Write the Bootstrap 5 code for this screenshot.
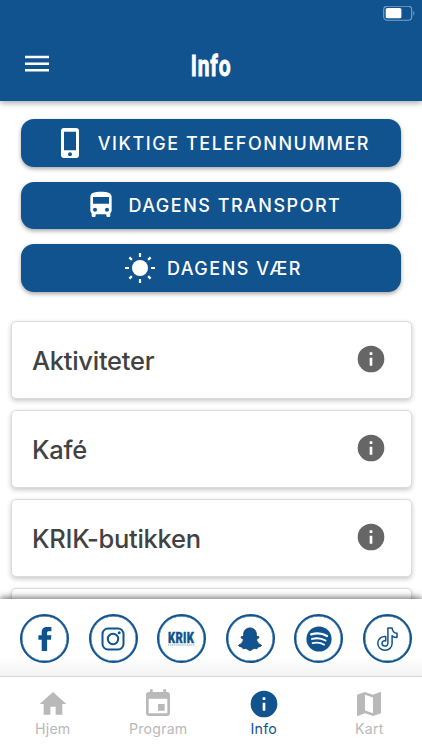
<!DOCTYPE html>
<html lang="no">
<head>
<meta charset="utf-8">
<meta name="viewport" content="width=device-width, initial-scale=1">
<title>Info</title>
<link href="https://cdn.jsdelivr.net/npm/bootstrap@5.3.0/dist/css/bootstrap.min.css" rel="stylesheet">
<style>
:root{--brand:#10538f}
body{font-family:Inter,Roboto,"Liberation Sans",sans-serif;height:750px;background:#fff}
svg{display:block;flex:none}
.app-head{height:100.5px;background:var(--brand);box-shadow:0 2px 6px rgba(0,0,0,.35);z-index:2}
.status-row{height:27px;padding:6px 7px 0 0}
.title-row{height:73px;padding:0 25px}
.page-title{font:700 30px/36px Roboto,sans-serif;letter-spacing:1.2px;transform:scaleX(.7);margin-top:4px;-webkit-text-stroke:.9px #fff}
.side{width:24px}
.main-area{min-height:0}
.actions{padding:18.5px 20.6px 0 21.4px;gap:15px}
.action{height:47.5px;border-radius:13px;background:var(--brand);color:#fff;font-size:18px;font-weight:500;letter-spacing:1.55px;border:0;padding:0 0 0 7px;box-shadow:0 2px 4px rgba(0,0,0,.35)}
.action span{padding-top:1px}
.action svg{margin-right:11px}
.action .phone{margin-right:18px}
.action.transit{padding-left:4px;letter-spacing:1.5px}
.action.sunny{padding-left:3px;letter-spacing:1.5px}
.topics{padding:29px 10.5px 0 11px;gap:11px}
.topic{height:78px;flex:none;border:1px solid #dcdcdc;border-radius:5px;padding:0 24px 2px 20px;color:#424242;font-size:25.5px;font-weight:450;letter-spacing:-.27px;box-shadow:0 2px 5px rgba(0,0,0,.22)}
.topic span{padding-top:6px}
.social{height:77px;padding:2px 10.5px 0 20px;background:linear-gradient(#fff 75%,#f3f3f3);box-shadow:0 -2px 6px rgba(0,0,0,.5);z-index:2}
.round{width:49px;height:49px;border:2.500px solid var(--brand);color:var(--brand);box-shadow:inset 0 0 0 .4px var(--brand)}
.krik{font:900 15.5px/12px Roboto,sans-serif;letter-spacing:.4px;transform:scaleX(.72);-webkit-text-stroke:.4px var(--brand)}
.tabs{height:74px;border-top:1px solid #d6d6d6;background:#fff;z-index:3}
.tab{width:25%;color:#b9b9b9;font-size:14.2px;line-height:18px;padding-top:10.5px;letter-spacing:.2px}
.tab.on{color:var(--brand)}
.tab svg{width:32px;height:32px}
</style>
<script src="https://cdn.jsdelivr.net/npm/bootstrap@5.3.0/dist/js/bootstrap.bundle.min.js"></script>
</head>
<body class="d-flex flex-column overflow-hidden">
<header class="app-head flex-shrink-0 position-relative text-white">
  <div class="status-row d-flex justify-content-end">
    <svg width="32" height="16" viewBox="0 0 32 16" fill="none"><rect x=".7" y=".2" width="28" height="14" rx="3.5" stroke="#7fa3c6" stroke-width="1.1"/><rect x="2.7" y="2" width="15.7" height="10.3" rx="1.6" fill="#fff"/><path d="M30.3 5v4.4c1.5-.7 1.5-3.700 0-4.400z" fill="#7fa3c6"/></svg>
  </div>
  <div class="title-row d-flex align-items-center justify-content-between">
    <svg class="side" width="24" height="18" viewBox="0 0 24 18"><path d="M0 .7h24v2.500H0zM0 7.400h24v2.500H0zM0 14h24v2.500H0z" fill="#fff"/></svg>
    <h1 class="page-title mb-0">Info</h1>
    <span class="side"></span>
  </div>
</header>
<main class="main-area flex-grow-1 overflow-hidden d-flex flex-column">
  <div class="actions d-flex flex-column flex-shrink-0">
    <button class="action btn d-flex align-items-center justify-content-center">
      <svg class="phone" width="20" height="32" viewBox="0 0 20 32"><path fill="#fff" fill-rule="evenodd" d="M4 1h12a3 3 0 0 1 3 3v24a3 3 0 0 1-3 3H4a3 3 0 0 1-3-3V4a3 3 0 0 1 3-3zM4 4.700v18.600h12V4.700zM10 25.200a2 2 0 1 0 0 4 2 2 0 0 0 0-4z"/></svg>
      <span>VIKTIGE TELEFONNUMMER</span>
    </button>
    <button class="action transit btn d-flex align-items-center justify-content-center">
      <svg width="32" height="32" viewBox="0 0 24 24" fill="currentColor"><path d="M18 11H6V6H18M16.500 17A1.500 1.500 0 0 1 15 15.500A1.500 1.500 0 0 1 16.500 14A1.500 1.500 0 0 1 18 15.500A1.500 1.500 0 0 1 16.500 17M7.500 17A1.500 1.500 0 0 1 6 15.500A1.500 1.500 0 0 1 7.500 14A1.500 1.500 0 0 1 9 15.500A1.500 1.500 0 0 1 7.500 17M4 16C4 16.880 4.390 17.670 5 18.220V20A1 1 0 0 0 6 21H7A1 1 0 0 0 8 20V19H16V20A1 1 0 0 0 17 21H18A1 1 0 0 0 19 20V18.220C19.610 17.670 20 16.880 20 16V6C20 2.500 16.420 2 12 2C7.580 2 4 2.500 4 6V16Z"/></svg>
      <span>DAGENS TRANSPORT</span>
    </button>
    <button class="action sunny btn d-flex align-items-center justify-content-center">
      <svg width="32" height="32" viewBox="-16 -16 32 32"><circle r="8" fill="#fff"/><path stroke="#fff" stroke-width="2.200" d="M0-15v4M0 11v4M-15 0h4M11 0h4M-10.600-10.600l2.500 2.500M10.600 10.600l-2.500-2.500M-10.600 10.600l2.500-2.500M10.600-10.600l-2.500 2.500"/></svg>
      <span>DAGENS VÆR</span>
    </button>
  </div>
  <div class="topics d-flex flex-column">
    <div class="topic bg-white d-flex align-items-center justify-content-between"><span>Aktiviteter</span><svg width="32" height="32" viewBox="0 0 24 24" fill="#666"><path d="M12 2a10 10 0 1 0 0 20 10 10 0 0 0 0-20zm1 15h-2v-6h2zm0-8h-2V7h2z"/></svg></div>
    <div class="topic bg-white d-flex align-items-center justify-content-between"><span>Kafé</span><svg width="32" height="32" viewBox="0 0 24 24" fill="#666"><path d="M12 2a10 10 0 1 0 0 20 10 10 0 0 0 0-20zm1 15h-2v-6h2zm0-8h-2V7h2z"/></svg></div>
    <div class="topic bg-white d-flex align-items-center justify-content-between"><span>KRIK-butikken</span><svg width="32" height="32" viewBox="0 0 24 24" fill="#666"><path d="M12 2a10 10 0 1 0 0 20 10 10 0 0 0 0-20zm1 15h-2v-6h2zm0-8h-2V7h2z"/></svg></div>
    <div class="topic bg-white"></div>
  </div>
</main>
<section class="social flex-shrink-0 position-relative d-flex align-items-center justify-content-between">
  <div class="round rounded-circle bg-white d-flex align-items-center justify-content-center"><svg width="26" height="26" viewBox="-13 -13 26 26" fill="currentColor"><path d="M-3.300 12V.8h-3.300v-4.500h3.300v-3c0-3.600 2-5.300 5.200-5.300h4.500v4.200H3.800c-1.200 0-1.700.6-1.700 1.700v2.400h4.300L5.900.8H2.100V12z"/></svg></div>
  <div class="round rounded-circle bg-white d-flex align-items-center justify-content-center"><svg width="26" height="26" viewBox="-13 -13 26 26" fill="none" stroke="currentColor" stroke-width="2"><rect x="-10.500" y="-10.500" width="21" height="21" rx="5.500"/><circle r="5.200"/><circle cx="6.200" cy="-6.200" r="1.500" fill="currentColor" stroke="none"/></svg></div>
  <div class="round rounded-circle bg-white d-flex flex-column align-items-center justify-content-center"><span class="krik">KRIK</span><svg width="27" height="2" viewBox="0 0 27 2"><path d="M0 1h27" stroke="#10538f" stroke-width="1" stroke-dasharray="1.300 .6" opacity=".5"/></svg></div>
  <div class="round rounded-circle bg-white d-flex align-items-center justify-content-center"><svg width="26" height="26" viewBox="-13 -13 26 26" fill="#10538f" stroke="#153c63" stroke-width=".9" stroke-linejoin="round"><path d="M0-11C4-11 6.300-8.300 6.300-4.800V-2.500C7.400-2.100 8.600-3 9-2 9.300-.9 7.100-.5 6.500.7 7.200 3.500 9.200 5.400 11.500 6.200 11.200 7.700 8.500 7.700 7.800 8.200 7.500 8.700 7.600 9.500 6.900 9.700 5.800 9.800 4.600 9.100 3.300 9.800 2 10.600 1.200 11.400 0 11.400S-2 10.600-3.300 9.800C-4.600 9.100-5.800 9.800-6.900 9.700-7.600 9.500-7.500 8.700-7.800 8.200-8.500 7.700-11.200 7.700-11.500 6.200-9.200 5.400-7.200 3.500-6.500.7-7.100-.5-9.300-.9-9-2-8.600-3-7.400-2.100-6.300-2.500V-4.800C-6.300-8.300-4-11 0-11z"/></svg></div>
  <div class="round rounded-circle bg-white d-flex align-items-center justify-content-center"><svg width="26" height="26" viewBox="-13 -13 26 26"><circle r="12.600" fill="currentColor"/><path fill="none" stroke="#fff" stroke-linecap="round" stroke-width="2.300" d="M-7.800-4.700C-2.500-6.200 3.500-5.700 8-3"/><path fill="none" stroke="#fff" stroke-linecap="round" stroke-width="2" d="M-7-.1C-2.300-1.400 2.600-.9 6.500 1.500"/><path fill="none" stroke="#fff" stroke-linecap="round" stroke-width="1.700" d="M-6.400 4.200C-2.300 3.200 1.800 3.600 5.200 5.700"/></svg></div>
  <div class="round rounded-circle bg-white d-flex align-items-center justify-content-center"><svg width="26" height="26" viewBox="-13 -13 26 26" fill="none" stroke="currentColor" stroke-width="1.500" stroke-linejoin="round"><path d="M.9-11h4.200C5.300-8 7.200-6 10-5.700v4.200C8.200-1.500 6.500-2.100 5.100-3.200V4.500C5.100 8.500 2 11.200-2 11.200S-9.200 8.200-9.200 4.300C-9.200 0-5.500-3-1.300-2.500V2C-3.500 1.400-5 2.700-5 4.300-5 6-3.700 7.100-2.100 7.100.1 7.100.9 5.500.9 3.700z"/></svg></div>
</section>
<nav class="tabs flex-shrink-0 position-relative d-flex">
  <div class="tab d-flex flex-column align-items-center"><svg viewBox="0 0 24 24" fill="currentColor"><path d="M10 20v-6h4v6h5v-8h3L12 3 2 12h3v8z"/></svg><span>Hjem</span></div>
  <div class="tab d-flex flex-column align-items-center"><svg viewBox="0 0 24 24" fill="currentColor"><path d="M17 12h-5v5h5v-5zM16 1v2H8V1H6v2H5c-1.110 0-2 .9-2 2v14c0 1.100.89 2 2 2h14c1.100 0 2-.9 2-2V5c0-1.100-.9-2-2-2h-1V1h-2zm3 18H5V8h14v11z"/></svg><span>Program</span></div>
  <div class="tab on d-flex flex-column align-items-center"><svg viewBox="0 0 24 24" fill="currentColor"><path d="M12 2a10 10 0 1 0 0 20 10 10 0 0 0 0-20zm1 15h-2v-6h2zm0-8h-2V7h2z"/></svg><span>Info</span></div>
  <div class="tab d-flex flex-column align-items-center"><svg viewBox="0 0 24 24" fill="currentColor"><path d="M20.500 3l-.16.030L15 5.100 9 3 3.360 4.900c-.21.070-.36.250-.36.480V20.500c0 .28.220.5.500.5l.16-.03L9 18.900l6 2.100 5.640-1.900c.21-.07.360-.25.360-.48V3.500c0-.28-.22-.5-.5-.5zM15 19l-6-2.110V5l6 2.110V19z"/></svg><span>Kart</span></div>
</nav>
</body>
</html>
